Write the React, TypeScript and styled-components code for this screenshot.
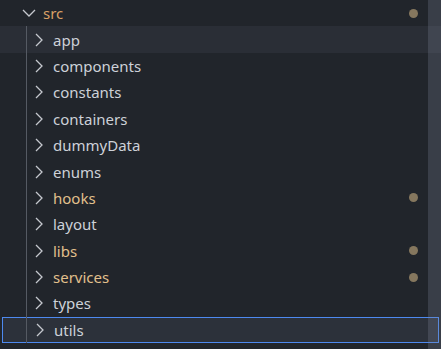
import React from "react";
import styled, { createGlobalStyle } from "styled-components";

const GlobalStyle = createGlobalStyle`
  html, body {
    margin: 0;
    padding: 0;
    background: #21252b;
  }
  body {
    font-family: "Noto Sans", "Open Sans", sans-serif;
  }
`;

const Explorer = styled.div`
  position: relative;
  width: 441px;
  height: 349px;
  overflow: hidden;
  background: #21252b;
`;

const Row = styled.div<{ $depth: number; $hover?: boolean; $selected?: boolean }>`
  display: flex;
  align-items: center;
  box-sizing: border-box;
  height: 26.4px;
  padding-left: ${(p) => 21 + p.$depth * 10}px;
  padding-right: 23px;
  margin: ${(p) => (p.$selected ? "0 2px" : "0")};
  background: ${(p) => (p.$selected ? "#2c313a" : p.$hover ? "#2a2e36" : "transparent")};
  border: ${(p) => (p.$selected ? "1px solid #4d89ef" : "none")};
  ${(p) => p.$selected && `padding-left: ${19 + p.$depth * 10}px;`}
`;

const Twistie = styled.span`
  display: flex;
  align-items: center;
  justify-content: center;
  width: 16px;
  height: 16px;
  flex: none;
  color: #c5c8ce;
`;

const Label = styled.span<{ $tone: "plain" | "modified" | "root" }>`
  flex: 1;
  margin-left: ${(p) => (p.$tone === "root" ? 6 : 6)}px;
  font-size: 15px;
  line-height: 20px;
  color: ${(p) =>
    p.$tone === "root" ? "#d9a066" : p.$tone === "modified" ? "#e2c08d" : "#cdd1d8"};
  white-space: nowrap;
`;

const Dot = styled.span`
  width: 9px;
  height: 9px;
  border-radius: 50%;
  background: #85775e;
  flex: none;
`;

const Children = styled.div`
  position: relative;
`;

const IndentGuide = styled.div`
  position: absolute;
  left: 26px;
  top: 0;
  bottom: 0;
  width: 1px;
  background: #555a63;
  pointer-events: none;
`;

const Scrollbar = styled.div`
  position: absolute;
  top: 0;
  right: 0;
  width: 13px;
  height: 100%;
  background: rgba(130, 138, 161, 0.25);
  pointer-events: none;
`;

const ChevronDown = () => (
  <svg width="14" height="8" viewBox="0 0 14 8">
    <path d="M1 1l6 6 6-6" fill="none" stroke="currentColor" strokeWidth="1.3" />
  </svg>
);

const ChevronRight = () => (
  <svg width="8" height="14" viewBox="0 0 8 14">
    <path d="M1 1l6 6-6 6" fill="none" stroke="currentColor" strokeWidth="1.3" />
  </svg>
);

type Folder = { name: string; modified?: boolean };

const folders: Folder[] = [
  { name: "app" },
  { name: "components" },
  { name: "constants" },
  { name: "containers" },
  { name: "dummyData" },
  { name: "enums" },
  { name: "hooks", modified: true },
  { name: "layout" },
  { name: "libs", modified: true },
  { name: "services", modified: true },
  { name: "types" },
  { name: "utils" },
];

const App: React.FC = () => {
  return (
    <>
      <GlobalStyle />
      <Explorer>
        <Row $depth={0}>
          <Twistie>
            <ChevronDown />
          </Twistie>
          <Label $tone="root">src</Label>
          <Dot />
        </Row>
        <Children>
          <IndentGuide />
          {folders.map((f) => (
            <Row
              key={f.name}
              $depth={1}
              $hover={f.name === "app"}
              $selected={f.name === "utils"}
            >
              <Twistie>
                <ChevronRight />
              </Twistie>
              <Label $tone={f.modified ? "modified" : "plain"}>{f.name}</Label>
              {f.modified && <Dot />}
            </Row>
          ))}
        </Children>
        <Scrollbar />
      </Explorer>
    </>
  );
};

export default App;
